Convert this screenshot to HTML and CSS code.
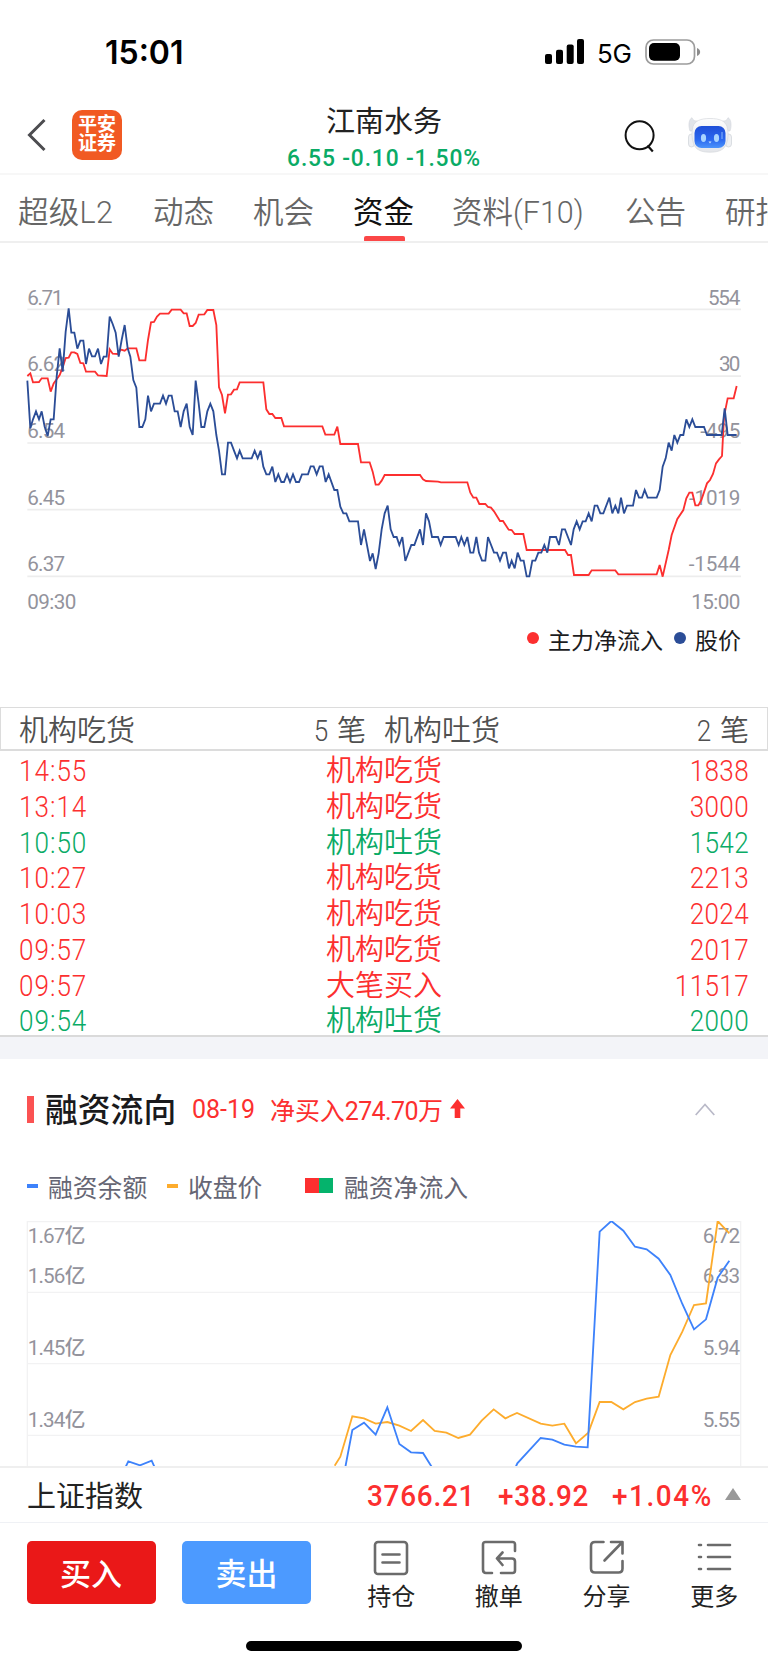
FILE: index.html
```html
<!DOCTYPE html>
<html lang="zh-CN">
<head>
<meta charset="utf-8">
<title>江南水务</title>
<link rel="stylesheet" href="styles.css">
</head>
<body>
<div class="status">
  <span class="clock">15:01</span>
  <svg class="signal" viewBox="0 0 39 25" width="39" height="25">
    <rect x="0" y="15" width="7" height="10" rx="2"/><rect x="11" y="10.7" width="7" height="14.3" rx="2"/><rect x="21.7" y="5.5" width="7" height="19.5" rx="2"/><rect x="32" y="0" width="7" height="25" rx="2"/>
  </svg>
  <span class="net">5G</span>
  <svg class="battery" viewBox="0 0 57 26" width="57" height="26">
    <rect x="1" y="1" width="48.500" height="24" rx="7.500" fill="none" stroke="#9c9c9c" stroke-width="1.700"/>
    <rect x="4" y="4" width="31" height="17.800" rx="5" fill="#000"/>
    <path d="M52 9c4.200 1.500 4.200 6.500 0 8z" fill="#8c8c8c"/>
  </svg>
</div>

<header class="header">
  <svg class="back" viewBox="0 0 20 34" width="20" height="34"><path d="M18.500 2 3.500 17l15 15" fill="none" stroke="#4c4c50" stroke-width="3"/></svg>
  <div class="logo"><span>平安</span><span>证券</span></div>
  <div class="stock">
    <h1 class="name">江南水务</h1>
    <div class="quote">6.55 -0.10 -1.50%</div>
  </div>
  <svg class="search" viewBox="0 0 32 34" width="32" height="34"><circle cx="15.600" cy="15.300" r="14" fill="none" stroke="#111" stroke-width="2"/><path d="M23.500 25.500l5.300 6" stroke="#111" stroke-width="2.200"/></svg>
  <svg class="robot" viewBox="0 0 44 36" width="44" height="36">
    <defs>
      <linearGradient id="face" x1="0" y1="0" x2="0" y2="1"><stop offset="0" stop-color="#1f4fd8"/><stop offset=".6" stop-color="#2a66ee"/><stop offset="1" stop-color="#4c94fb"/></linearGradient>
      <linearGradient id="shell" x1="0" y1="0" x2="0" y2="1"><stop offset="0" stop-color="#fcfcfd"/><stop offset="1" stop-color="#e4e6ea"/></linearGradient>
    </defs>
    <path d="M2 14C0 8 1 2 4 .700c1 3 3 3.300 5.500 3.300L7 14zM42 14c2-6 1-12-2-13.300-1 3-3 3.300-5.500 3.300L37 14z" fill="#e1e4e9" stroke="#d2d5db" stroke-width=".6"/>
    <rect x=".5" y="17" width="6" height="13" rx="3" fill="#eef0f3" stroke="#cfd2d8" stroke-width=".7"/>
    <rect x="37.500" y="17" width="6" height="13" rx="3" fill="#eef0f3" stroke="#cfd2d8" stroke-width=".7"/>
    <path d="M22 1.500c10 0 15 2.500 17 8 1.500 5 1.500 12-.5 17-2 6-7 8.700-16.500 8.700S7.500 32.500 5.500 26.500c-2-5-2-12-.5-17 2-5.500 7-8 17-8z" fill="url(#shell)" stroke="#d6d8dd" stroke-width=".7"/>
    <rect x="6.500" y="9" width="31" height="22" rx="7" fill="url(#face)"/>
    <ellipse cx="15.500" cy="21" rx="2.600" ry="4" fill="#a9d4ff"/><ellipse cx="28.500" cy="21" rx="2.600" ry="4" fill="#a9d4ff"/>
    <path d="M20.500 24.500h3L22 26.500z" fill="#c5e2ff"/><path d="M34 15v7" stroke="#89b9ff" stroke-width="1"/>
  </svg>
</header>

<nav class="tabs">
  <span class="tab t1">超级L2</span><span class="tab t2">动态</span><span class="tab t3">机会</span><span class="tab t4 on">资金</span><span class="tab t5">资料(F10)</span><span class="tab t6">公告</span><span class="tab t7">研报</span>
</nav>

<section class="flow">
  <svg class="flowchart" viewBox="0 0 2304 1020" width="768" height="340">
    <path d="M82 88H2223M82 288.500H2223M82 489H2223M82 689H2223M82 889H2223" stroke="#ededed" stroke-width="5"/>
    <g class="axis">
      <text x="82" y="74" textLength="108">6.71</text><text x="82" y="274" textLength="113">6.62</text><text x="82" y="474" textLength="113">6.54</text><text x="82" y="674" textLength="113">6.45</text><text x="82" y="874" textLength="113">6.37</text><text x="82" y="987" textLength="147">09:30</text>
      <text x="2124" y="74" textLength="97">554</text><text x="2157" y="274" textLength="64">30</text><text x="2101" y="474" textLength="120">-495</text><text x="2067" y="674" textLength="154">-1019</text><text x="2066" y="874" textLength="155">-1544</text><text x="2074" y="987" textLength="147">15:00</text>
    </g>
    <polyline class="line red-line" points="82,288 91,280 99,307 117,306 125,295 143,295 152,335 161,310 170,298 179,285 188,262 197,234 206,233 214,217 223,217 232,222 241,249 250,250 258,275 285,275 294,286 320,288 329,208 338,221 353,222 362,209 374,212 383,205 409,205 418,241 436,241 444,180 453,127 462,126 471,110 480,101 506,101 515,89 542,89 551,100 560,100 569,138 578,138 587,129 596,104 613,103 622,90 640,90 649,135 657,322 666,345 675,400 684,344 693,343 702,329 711,328 719,307 790,307 799,388 808,402 817,402 826,414 844,414 852,439 967,439 976,464 1003,464 1012,440 1021,492 1074,492 1083,547 1109,547 1118,575 1127,614 1136,614 1145,602 1154,585 1260,585 1269,598 1278,603 1314,605 1323,607 1402,607 1411,638 1420,653 1429,653 1438,672 1456,672 1464,681 1473,683 1482,694 1500,723 1509,723 1526,749 1535,750 1544,762 1570,762 1580,810 1695,810 1704,825 1713,825 1722,885 1766,885 1775,871 1846,871 1855,883 1970,883 1979,855 1988,890 2006,810 2015,765 2032,717 2050,690 2059,655 2068,638 2077,638 2086,676 2095,676 2104,660 2121,610 2130,600 2139,582 2148,550 2157,538 2166,528 2172,410 2183,355 2201,355 2210,318"/>
    <polyline class="line navy-line" points="82,302 91,445 99,418 108,394 117,418 125,394 134,440 143,468 152,418 161,418 170,290 179,205 188,275 197,155 206,85 214,158 223,158 232,206 241,182 250,182 258,252 267,206 276,229 285,229 294,206 303,252 311,230 320,230 329,110 338,132 347,158 356,230 365,180 374,135 383,205 391,230 400,300 409,323 418,441 427,441 436,418 444,347 453,394 462,371 480,371 489,347 498,371 506,347 515,347 524,394 533,394 542,441 551,394 560,371 569,441 578,465 587,302 596,370 604,441 613,441 622,394 631,371 640,394 649,465 657,512 666,583 675,583 684,488 693,488 702,512 711,535 719,512 728,535 755,535 764,512 773,535 782,512 790,560 799,583 808,583 817,560 826,606 835,583 844,606 852,606 861,583 870,606 879,583 888,606 897,606 906,583 924,583 932,559 941,559 950,583 959,559 968,559 977,606 986,583 1003,630 1012,630 1021,680 1030,700 1039,700 1048,724 1074,724 1083,795 1092,748 1110,843 1118,820 1127,867 1136,820 1145,748 1154,700 1163,677 1172,748 1181,771 1190,771 1198,795 1207,771 1216,843 1234,795 1243,795 1260,748 1269,795 1278,700 1287,724 1296,771 1314,771 1322,795 1331,771 1367,771 1376,795 1384,771 1393,795 1402,771 1411,818 1420,818 1429,771 1437,818 1446,842 1456,842 1464,771 1482,818 1491,818 1500,842 1509,818 1518,818 1527,865 1535,842 1544,865 1553,818 1562,842 1571,842 1580,889 1588,889 1597,842 1606,842 1615,818 1624,818 1633,795 1642,818 1650,771 1668,771 1677,795 1686,748 1695,748 1713,795 1721,748 1730,724 1739,748 1748,724 1757,724 1766,700 1775,724 1784,677 1792,677 1801,700 1810,700 1828,653 1837,700 1846,677 1855,700 1863,653 1872,700 1881,677 1899,677 1908,630 1917,653 1926,653 1934,630 1943,653 1970,653 1979,630 1988,560 1997,535 2006,488 2015,512 2023,465 2032,488 2041,465 2050,465 2059,418 2068,441 2077,418 2086,441 2112,441 2121,465 2165,465 2174,385 2183,465 2210,465"/>
  </svg>
  <div class="legend">
    <i class="dot red"></i><span class="leg-a">主力净流入</span><i class="dot navy"></i><span>股价</span>
  </div>
</section>

<section class="orders">
  <div class="summary"><span>机构吃货</span><span class="count"><b class="num">5</b>笔</span><span class="second">机构吐货</span><span class="count last"><b class="num">2</b>笔</span></div>
  <div class="row up"><span class="num l">14:55</span><span>机构吃货</span><span class="num r">1838</span></div>
  <div class="row up"><span class="num l">13:14</span><span>机构吃货</span><span class="num r">3000</span></div>
  <div class="row down"><span class="num l">10:50</span><span>机构吐货</span><span class="num r">1542</span></div>
  <div class="row up"><span class="num l">10:27</span><span>机构吃货</span><span class="num r">2213</span></div>
  <div class="row up"><span class="num l">10:03</span><span>机构吃货</span><span class="num r">2024</span></div>
  <div class="row up"><span class="num l">09:57</span><span>机构吃货</span><span class="num r">2017</span></div>
  <div class="row up"><span class="num l">09:57</span><span>大笔买入</span><span class="num r">11517</span></div>
  <div class="row down"><span class="num l">09:54</span><span>机构吐货</span><span class="num r">2000</span></div>
</section>

<section class="margin">
  <div class="mhead">
    <i class="mark"></i><h2 class="mtitle">融资流向</h2><span class="mdate">08-19</span><span class="mnet">净买入<span class="mnum">274.70</span>万</span>
    <svg class="up-arrow" viewBox="0 0 15 20" width="15" height="20"><path d="M7.500 0 15 9.500H10.300V19H4.700V9.500H0z" fill="#fc2f2f"/></svg>
    <svg class="fold" viewBox="0 0 20 13" width="20" height="13"><path d="M.7 12 10 1.500 19.300 12" fill="none" stroke="#b9b9c8" stroke-width="1.700"/></svg>
  </div>
  <div class="mlegend">
    <i class="dash blue"></i><span class="ml1">融资余额</span><i class="dash gold"></i><span class="ml2">收盘价</span><i class="swatch"></i><span>融资净流入</span>
  </div>
  <svg class="mchart" viewBox="0 483 2304 735" width="768" height="245">
    <path d="M82 1230V485H2222V1230M82 697H2222M82 911H2222M82 1126H2222" fill="none" stroke="#f2f2f3" stroke-width="4"/>
    <g class="axis">
      <text x="83" y="549" textLength="173">1.67亿</text><text x="83" y="670" textLength="173">1.56亿</text><text x="83" y="885" textLength="173">1.45亿</text><text x="83" y="1100" textLength="173">1.34亿</text>
      <text x="2108" y="549" textLength="112">6.72</text><text x="2108" y="670" textLength="112">6.33</text><text x="2108" y="885" textLength="112">5.94</text><text x="2108" y="1100" textLength="112">5.55</text>
    </g>
    <polyline class="line gold-line" points="1004,1217 1021,1190 1057,1069 1092,1075 1127,1091 1162,1086 1198,1097 1233,1113 1269,1080 1304,1113 1339,1118 1375,1134 1410,1124 1445,1082 1481,1048 1516,1075 1551,1059 1622,1091 1657,1097 1693,1091 1728,1150 1765,1118 1799,1026 1834,1026 1870,1048 1905,1026 1940,1016 1976,1010 2011,885 2047,815 2082,735 2118,730 2153,483 2188,520"/>
    <polyline class="line blue-line" points="372,1231 385,1204 420,1216 455,1202 468,1231"/>
    <polyline class="line blue-line" points="1034,1232 1057,1110 1092,1088 1127,1124 1162,1042 1198,1152 1233,1177 1269,1179 1301,1230"/>
    <polyline class="line blue-line" points="1543,1230 1552,1210 1622,1134 1657,1139 1693,1154 1728,1160 1763,1162 1799,515 1834,483 1870,512 1905,560 1940,568 1976,596 2011,645 2047,732 2082,808 2118,778 2153,653 2188,602"/>
  </svg>
</section>

<div class="index">
  <span class="iname">上证指数</span><span class="ival v1">3766.21</span><span class="ival v2">+38.92</span><span class="ival v3">+1.04%</span><i class="tri"></i>
</div>

<footer class="actions">
  <button class="btn buy">买入</button><button class="btn sell">卖出</button>
  <div class="act">
    <svg viewBox="0 0 36 36" width="36" height="36"><rect x="2" y="2" width="32" height="32" rx="3"/><path d="M9.500 14.500h17M9.500 22.500h17"/></svg>
    <span>持仓</span>
  </div>
  <div class="act">
    <svg viewBox="0 0 36 36" width="36" height="36"><path d="M34 11V4.500Q34 2 31.500 2H4.500Q2 2 2 4.500v25Q2 33 5 33h6M20 33h11.500Q34 33 34 30.500V21.500Q34 18.500 31 18.500H16M21.500 12.500 16 18.500l5.500 6.500"/></svg>
    <span>撤单</span>
  </div>
  <div class="act">
    <svg viewBox="0 0 36 36" width="36" height="36"><path d="M14.500 2H6Q2 2 2 6v22.500Q2 32.500 6 32.500h23.500Q33.500 32.500 33.500 28.500V21M22 2h11.500v11.500M33 2.500 15.500 20.500"/></svg>
    <span>分享</span>
  </div>
  <div class="act">
    <svg viewBox="0 0 36 36" width="36" height="36"><path d="M3 5h2M12 5h22M3 17h2M12 17h22M3 29h2M12 29h22"/></svg>
    <span>更多</span>
  </div>
</footer>
<div class="home"></div>
</body>
</html>
```

FILE: styles.css
```css
* { box-sizing: border-box; }
html, body { margin: 0; padding: 0; }
body {
  width: 768px; height: 1665px; overflow: hidden; background: #fff; color: #222;
  font-family: Roboto, "Noto Sans CJK SC", sans-serif;
}
h1, h2 { margin: 0; }
svg { display: block; flex: none; }
span, i { flex: none; white-space: nowrap; }

.status { height: 100px; display: flex; align-items: flex-start; padding: 39px 0 0 105px; color: #000; }
.clock { width: 440px; font: 600 32px/27px Inter, sans-serif; }
.net { width: 47px; margin-left: 13px; font: 400 26px/29px Inter, sans-serif; letter-spacing: -.2px; }
.battery { margin-left: 1px; }

.header { height: 75px; display: flex; align-items: flex-start; border-bottom: 2px solid #f7f7f7; padding-left: 26px; }
.back { margin-top: 18px; }
.logo {
  width: 50px; height: 50px; margin: 10px 0 0 26px; padding-top: 6px; border-radius: 10px;
  background: #f15a23; color: #fff; font-weight: 700; font-size: 19px; line-height: 18.500px;
  display: flex; flex-direction: column; align-items: center;
}
.stock { width: 524px; padding-top: 4px; text-align: center; }
.name { font-size: 29px; line-height: 36px; font-weight: 400; color: #222; }
.quote { margin-top: 6px; font-size: 24px; line-height: 24px; font-weight: 500; letter-spacing: .9px; color: #0aab66; transform: scaleX(.95); }
.search { margin: 20px 0 0 -22px; }
.robot { margin: 17px 0 0 32px; }

.tabs { height: 68px; display: flex; overflow: hidden; padding: 18px 0 0 18px; border-bottom: 2px solid #efefef; font-size: 30.500px; line-height: 40px; color: #666; }
.tab { height: 50px; font-weight: 350; }
.t1 { width: 135px; letter-spacing: .3px; } .t2 { width: 100px; } .t3 { width: 100px; } .t4 { width: 99px; } .t5 { width: 173px; } .t6 { width: 100px; }
.on { color: #111; font-weight: 400; }
.on::after { content: ""; display: block; width: 41px; height: 6px; margin: 3px 0 0 11px; border-radius: 2px; background: #fb4747; }

.flow { height: 464px; padding-top: 37px; }
.axis text { font-family: Roboto, "Noto Sans CJK SC", sans-serif; font-size: 62px; font-weight: 450; fill: #93939c; }
.line { fill: none; stroke-width: 5.500; stroke-linejoin: miter; stroke-miterlimit: 3; }
.red-line { stroke: #fc2f2f; } .navy-line { stroke: #2b4d97; } .gold-line { stroke: #fdac2d; } .blue-line { stroke: #3d82fb; }
.legend { display: flex; justify-content: flex-end; align-items: center; height: 36px; padding-right: 27px; margin-top: 1px; font-size: 23px; color: #1c1c1e; }
.dot { width: 12px; height: 12px; margin: -2px 9px 0 0; border-radius: 50%; }
.red { background: #fc2f2f; } .navy { background: #2b4d97; }
.leg-a { margin-right: 11px; }

.orders { height: 352px; font-size: 29px; border-bottom: 22px solid #f3f4f8; }
.summary { height: 44px; display: flex; align-items: center; padding: 5px 18px 0; border: 1px solid #dcdcdc; border-bottom-width: 2px; line-height: 38px; color: #505050; font-weight: 350; }
.num { display: inline-block; font-weight: 350; transform: scaleX(.9); }
.count { width: 231px; padding-right: 0; text-align: right; }
.count .num { margin-right: 8px; }
.second { margin-left: 18px; }
.last { width: auto; margin-left: auto; }
.row { height: 35.750px; display: grid; grid-template-columns: 1fr 120px 1fr; align-items: center; padding: 3px 19px 0; line-height: 34px; text-align: center; font-weight: 350; }
.row:last-child { border-bottom: 2px solid #dadada; }
.l { text-align: left; transform-origin: left; letter-spacing: 1.100px; }
.r { text-align: right; transform-origin: right; letter-spacing: .4px; }
.up { color: #fc2f2f; } .down { color: #0aab66; }

.margin { height: 407px; }
.mhead { height: 104px; display: flex; align-items: center; padding: 0 0 4px 27px; color: #fc2f2f; font-size: 25px; }
.mark { width: 7px; height: 27px; background: #fb5252; }
.mtitle { width: 147px; margin-left: 11px; padding-top: 4px; font-size: 32.800px; line-height: 48px; font-weight: 500; color: #1a1a1c; }
.mdate { width: 78px; padding-top: 1px; font-size: 25px; }
.mnet { width: 174px; letter-spacing: -.1px; }
.mnum { letter-spacing: -.6px; }
.up-arrow { margin-left: 6px; }
.fold { margin-left: 230px; }
.mlegend { height: 58px; display: flex; align-items: center; padding: 0 0 13px 27px; font-size: 24.800px; color: #666674; }
.dash { width: 11px; height: 4px; margin-right: 10px; }
.blue { background: #3d82fb; } .gold { background: #fdac2d; }
.ml1 { width: 119px; } .ml2 { width: 117px; }
.swatch { width: 28px; height: 15px; margin-right: 11px; background: linear-gradient(90deg, #fc2f2f 50%, #05b36c 50%); }

.index { height: 57px; display: flex; align-items: center; padding-left: 27px; border-top: 2px solid #efefef; border-bottom: 1px solid #eff1f5; }
.iname { width: 340px; padding-top: 3px; font-size: 29px; line-height: 48px; }
.ival { padding-top: 1px; font-size: 30px; font-weight: 500; color: #fc2f2f; transform: scaleX(.93); transform-origin: left; letter-spacing: .8px; }
.v1 { width: 131px; } .v2 { width: 114px; } .v3 { width: 113px; letter-spacing: 1.700px; }
.tri { border: 8px solid transparent; border-top: 0; border-bottom: 12px solid #999; margin-top: -2px; }

.actions { height: 117px; display: flex; align-items: flex-start; padding: 18px 0 0 27px; }
.btn { width: 129px; height: 63px; margin: 0 26.500px 0 0; padding: 0 1px 1px 0; border: 0; border-radius: 5px; color: #fff; font: 500 31px/40px "Noto Sans CJK SC", sans-serif; }
.buy { background: #ea1818; } .sell { background: #4c9aff; margin-right: 26px; }
.act { width: 107.700px; display: flex; flex-direction: column; align-items: center; font-size: 24px; line-height: 32px; }
.act svg { fill: none; stroke: #6b6b6b; stroke-width: 2.600; stroke-linecap: round; stroke-linejoin: round; margin-top: -1px; }
.act span { margin-top: 5px; }
.home { width: 276px; height: 10px; margin: 1px auto 0; border-radius: 5px; background: #000; }
```
